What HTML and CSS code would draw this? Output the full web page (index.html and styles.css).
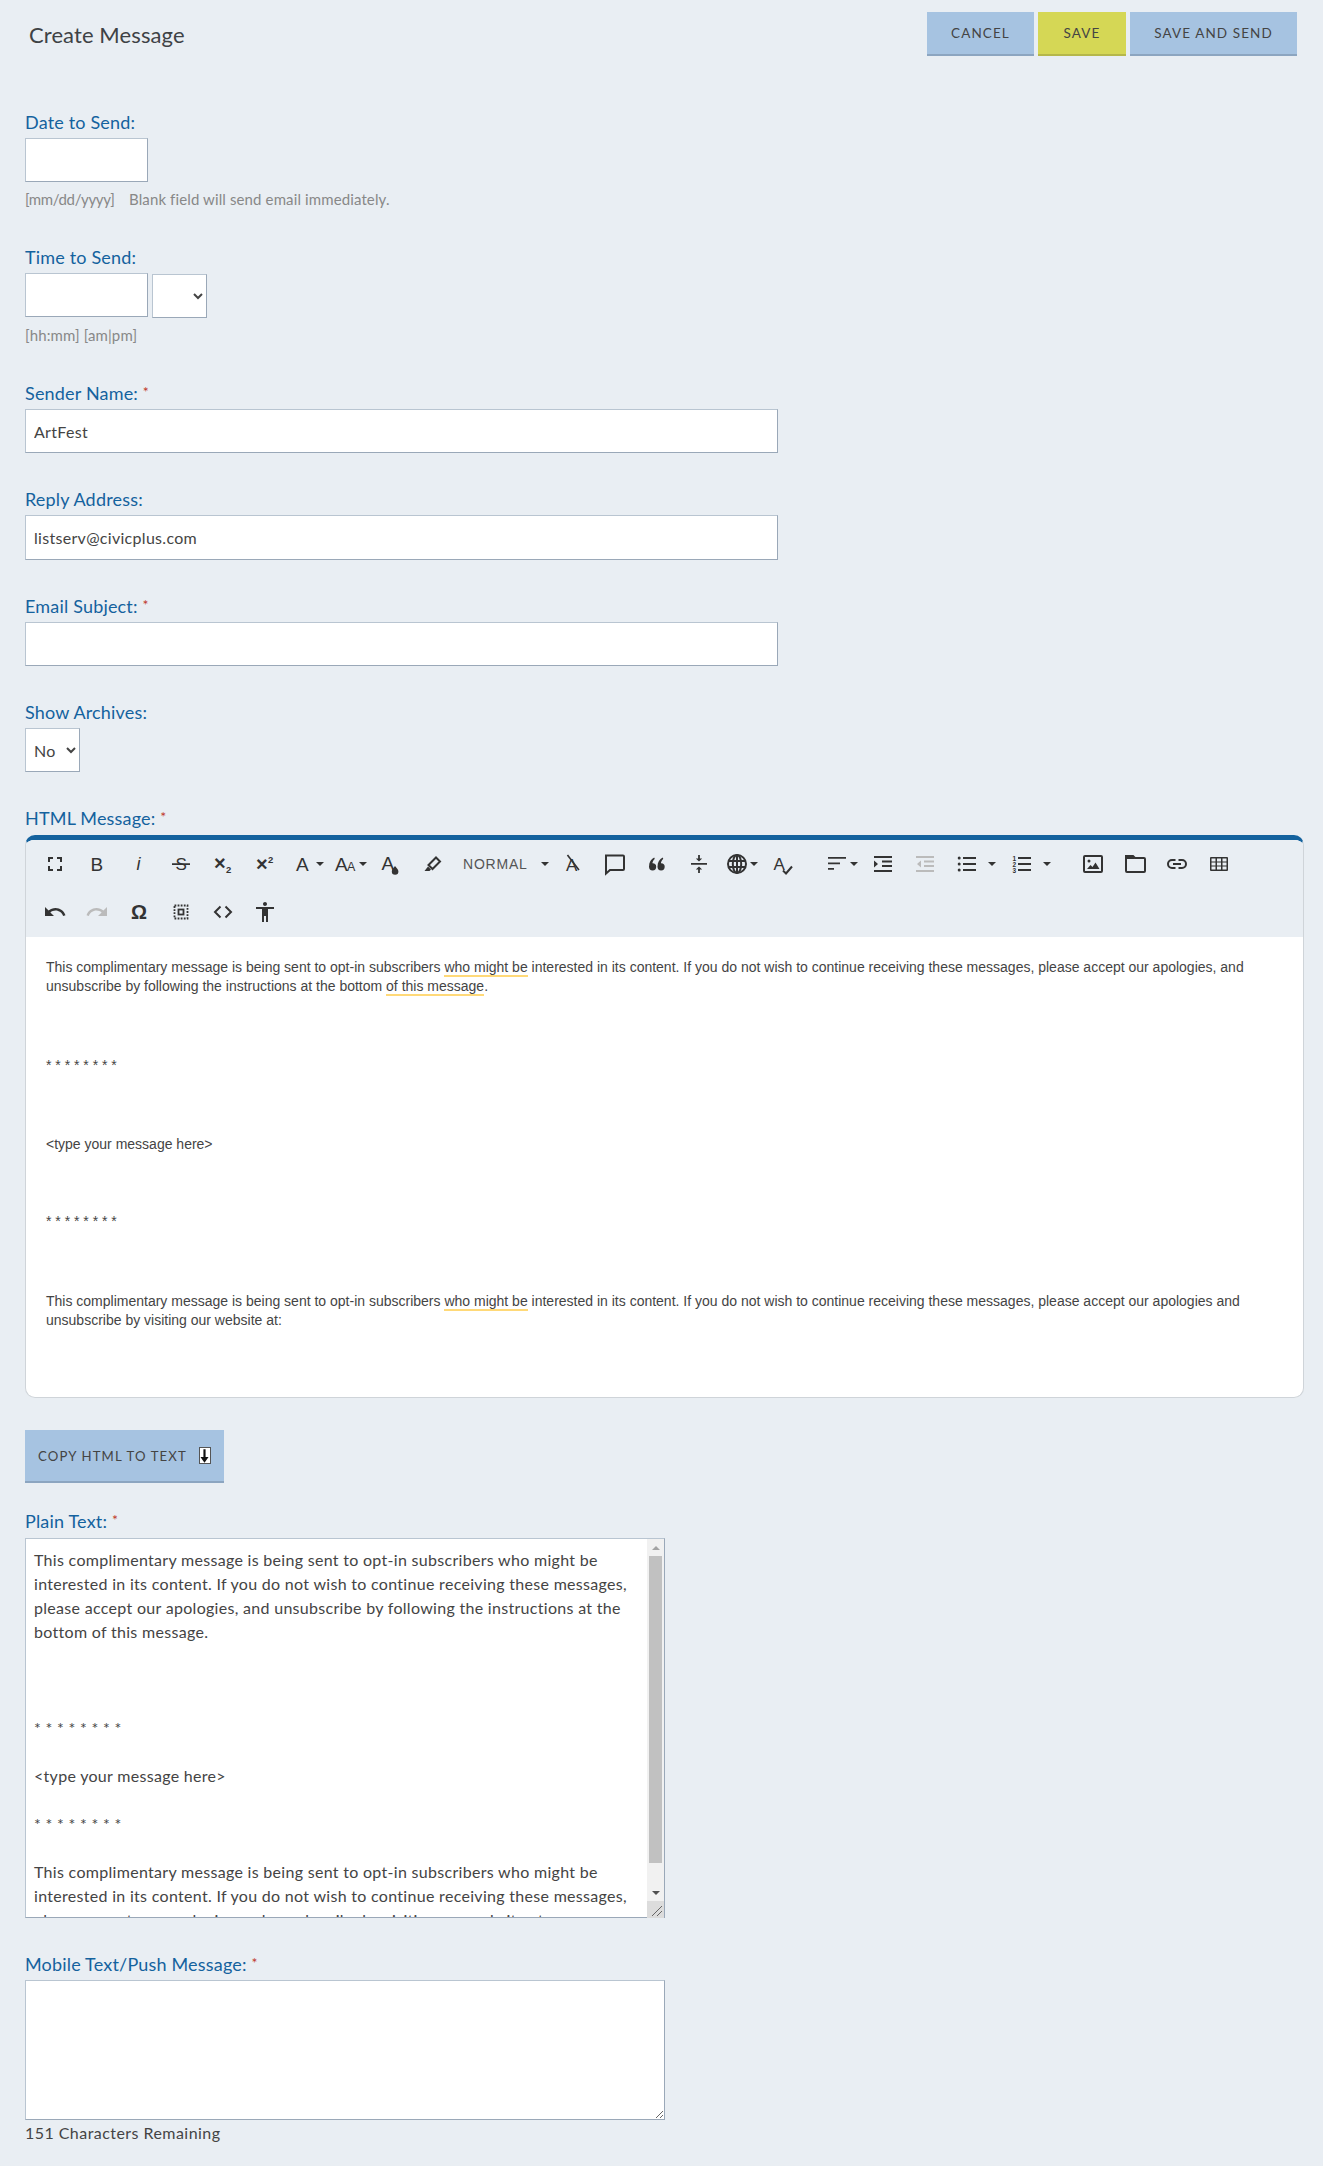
FILE: index.html
```html
<!DOCTYPE html>
<html lang="en">
<head>
    <meta charset="UTF-8">
    <title>Create Message</title>
    <link rel="stylesheet" href="styles.css">
</head>
<body>
    <div class="page">
        <div class="header">
            <h1 class="title">Create Message</h1>
            <div class="actions">
                <button type="button" class="btn btn-cancel">Cancel</button>
                <button type="button" class="btn btn-save">Save</button>
                <button type="button" class="btn btn-send">Save and Send</button>
            </div>
        </div>

        <!-- Schedule -->
        <div class="field field-schedule">
            <label class="label" for="dateSend">Date to Send:</label>
            <input class="input input-short" type="text" id="dateSend">
            <div class="hint"><span class="hint-format">[mm/dd/yyyy]</span>Blank field will send email immediately.</div>
        </div>
        <div class="field field-schedule">
            <label class="label" for="timeSend">Time to Send:</label>
            <div class="time-row">
                <input class="input input-short" type="text" id="timeSend">
                <select class="select select-ampm"><option></option><option>am</option><option>pm</option></select>
            </div>
            <div class="hint">[hh:mm] [am|pm]</div>
        </div>

        <!-- Sender -->
        <div class="field">
            <label class="label" for="senderName">Sender Name: <span class="req">*</span></label>
            <input class="input input-wide" type="text" id="senderName" value="ArtFest">
        </div>
        <div class="field">
            <label class="label" for="replyAddress">Reply Address:</label>
            <input class="input input-wide" type="text" id="replyAddress" value="listserv@civicplus.com">
        </div>
        <div class="field">
            <label class="label" for="emailSubject">Email Subject: <span class="req">*</span></label>
            <input class="input input-wide" type="text" id="emailSubject">
        </div>
        <div class="field">
            <label class="label" for="showArchives">Show Archives:</label>
            <select class="select select-archive" id="showArchives"><option>No</option><option>Yes</option></select>
        </div>

        <!-- Editor -->
        <div class="field-editor">
            <div class="label">HTML Message: <span class="req">*</span></div>
            <div class="editor">
                <div class="toolbar">
                    <div class="tool-row">
                        <button type="button" class="tool"><svg viewBox="0 0 24 24"><path d="M5 5h5v2H7v3H5z M14 5h5v5h-2V7h-3z M5 14h2v3h3v2H5z M17 14h2v5h-5v-2h3z"/></svg></button>
                        <button type="button" class="tool"><svg viewBox="0 0 24 24"><text class="ico-text" x="5.500" y="19" font-size="19">B</text></svg></button>
                        <button type="button" class="tool"><svg viewBox="0 0 24 24"><text class="ico-text" x="9.500" y="18" font-size="18" font-style="italic">i</text></svg></button>
                        <button type="button" class="tool"><svg viewBox="0 0 24 24"><text class="ico-text" x="6.500" y="18" font-size="17">S</text><path d="M3 11.300h18v1.600H3z"/></svg></button>
                        <button type="button" class="tool"><svg viewBox="0 0 24 24"><text class="ico-bold" x="3" y="18" font-size="20">×</text><text class="ico-bold" x="15" y="21" font-size="9.500">2</text></svg></button>
                        <button type="button" class="tool"><svg viewBox="0 0 24 24"><text class="ico-bold" x="3" y="19" font-size="20">×</text><text class="ico-bold" x="15" y="11" font-size="9.500">2</text></svg></button>
                        <button type="button" class="tool tool-font"><svg viewBox="0 0 24 24"><text class="ico-text" x="5" y="19" font-size="19">A</text></svg><span class="caret"></span></button>
                        <button type="button" class="tool tool-size"><svg viewBox="0 0 24 24"><text class="ico-text" x="1" y="19" font-size="19">A</text><text class="ico-text" x="13" y="19" font-size="12.500">A</text></svg><span class="caret"></span></button>
                        <button type="button" class="tool"><svg viewBox="0 0 24 24"><text class="ico-text" x="2.500" y="18" font-size="19">A</text><path d="M16 14c-2 2.500-3.200 3.800-3.200 5.400a3.300 3.300 0 0 0 6.600 0c0-1.600-1.300-2.900-3.400-5.400z"/></svg></button>
                        <button type="button" class="tool"><svg viewBox="0 0 24 24"><path class="ico-line" d="M15 5.500l4 4-7.500 7.500-4-4z"/><path d="M7 14.500l3 3-1.500 1.500H3.500z"/></svg></button>
                        <button type="button" class="tool tool-format"><span class="format-name">Normal</span><span class="caret"></span></button>
                        <button type="button" class="tool"><svg viewBox="0 0 24 24"><text class="ico-text" x="5" y="19" font-size="17">A</text><path d="M5.800 3.500l1.300-1 11.500 15-1.300 1z"/></svg></button>
                        <button type="button" class="tool"><svg viewBox="0 0 24 24"><path class="ico-line" d="M3 3.500h17a1 1 0 0 1 1 1V17a1 1 0 0 1-1 1H7l-4 3.500z"/></svg></button>
                        <button type="button" class="tool"><svg viewBox="0 0 24 24"><path d="M9.200 5.500C6 7 4 10.200 4 14.800a3.600 3.600 0 1 0 3.600-3.600c-.3 0 .2-2.700 2.200-4.200z M17.700 5.500c-3.200 1.500-5.200 4.700-5.200 9.300a3.600 3.600 0 1 0 3.600-3.600c-.3 0 .2-2.700 2.200-4.200z"/></svg></button>
                        <button type="button" class="tool"><svg viewBox="0 0 24 24"><path d="M4 11h16v1.800H4z M11.100 3h1.800v3.500h2.300L12 9.500 8.800 6.500h2.300z M12 14.500l3.200 3h-2.300V21h-1.800v-3.500H8.800z"/></svg></button>
                        <button type="button" class="tool tool-lang"><svg viewBox="0 0 24 24"><g class="ico-line"><circle cx="12" cy="12" r="9"/><ellipse cx="12" cy="12" rx="4.200" ry="9"/><path d="M3 9h18M3 15h18M12 3v18"/></g></svg><span class="caret"></span></button>
                        <button type="button" class="tool"><svg viewBox="0 0 24 24"><text class="ico-text" x="2.500" y="18" font-size="17">A</text><path class="ico-line" d="M12 18.500l3 3 6-7"/></svg></button>
                        <button type="button" class="tool tool-align"><svg viewBox="0 0 24 24"><path d="M3 5h18v1.800H3z M3 10.500h12v1.800H3z M3 16h6v1.800H3z"/></svg><span class="caret"></span></button>
                        <button type="button" class="tool"><svg viewBox="0 0 24 24"><path d="M3 4h18v2H3z M11 8.500h10v2H11z M11 13h10v2H11z M3 18h18v2H3z M3 8.500L7 12l-4 3.500z"/></svg></button>
                        <button type="button" class="tool tool-off"><svg viewBox="0 0 24 24"><path d="M3 4h18v2H3z M11 8.500h10v2H11z M11 13h10v2H11z M3 18h18v2H3z M8 8.500V15.500L4 12z"/></svg></button>
                        <button type="button" class="tool tool-list"><svg viewBox="0 0 24 24"><circle cx="4.200" cy="6" r="1.500"/><circle cx="4.200" cy="12" r="1.500"/><circle cx="4.200" cy="18" r="1.500"/><path d="M8 5h13v2H8z M8 11h13v2H8z M8 17h13v2H8z"/></svg><span class="caret"></span></button>
                        <button type="button" class="tool tool-list tool-list-num"><svg viewBox="0 0 24 24"><text class="ico-bold" x="2.500" y="8.500" font-size="6.500">1</text><text class="ico-bold" x="2.500" y="14.500" font-size="6.500">2</text><text class="ico-bold" x="2.500" y="20.500" font-size="6.500">3</text><path d="M8 5h13v2H8z M8 11h13v2H8z M8 17h13v2H8z"/></svg><span class="caret"></span></button>
                        <button type="button" class="tool tool-insert"><svg viewBox="0 0 24 24"><rect class="ico-line" x="3" y="4" width="18" height="16" rx="1"/><circle cx="8" cy="9" r="1.500"/><path d="M6 17l3.500-4 2 2 3-4.500L18.500 17z"/></svg></button>
                        <button type="button" class="tool"><svg viewBox="0 0 24 24"><path class="ico-line" d="M3 4h7l2 2h9a1 1 0 0 1 1 1v12a1 1 0 0 1-1 1H4a1 1 0 0 1-1-1z"/><path d="M3 4h7l2 3H3z"/></svg></button>
                        <button type="button" class="tool"><svg viewBox="0 0 24 24"><path class="ico-line" d="M10.500 8H7a4 4 0 0 0 0 8h3.500 M13.500 8H17a4 4 0 0 1 0 8h-3.500 M8 12h8"/></svg></button>
                        <button type="button" class="tool"><svg viewBox="0 0 24 24"><path d="M4 5h16a1 1 0 0 1 1 1v12a1 1 0 0 1-1 1H4a1 1 0 0 1-1-1V6a1 1 0 0 1 1-1z M4.500 6.500v3h4v-3z M10 6.500v3h4v-3z M15.500 6.500v3h4v-3z M4.500 10.500v3h4v-3z M10 10.500v3h4v-3z M15.500 10.500v3h4v-3z M4.500 14.500v3h4v-3z M10 14.500v3h4v-3z M15.500 14.500v3h4v-3z" fill-rule="evenodd"/></svg></button>
                    </div>
                    <div class="tool-row">
                        <button type="button" class="tool"><svg viewBox="0 0 24 24"><path d="M12.500 8c-2.650 0-5.050.99-6.900 2.600L2 7v9h9l-3.620-3.620c1.390-1.160 3.160-1.880 5.120-1.880 3.540 0 6.550 2.310 7.600 5.500l2.370-.78C21.080 11.030 17.150 8 12.500 8z"/></svg></button>
                        <button type="button" class="tool tool-off"><svg viewBox="0 0 24 24"><path d="M18.400 10.600C16.550 8.990 14.150 8 11.500 8c-4.650 0-8.580 3.030-9.960 7.220l2.360.78c1.050-3.190 4.050-5.500 7.600-5.500 1.950 0 3.730.72 5.120 1.880L13 16h9V7z"/></svg></button>
                        <button type="button" class="tool"><svg viewBox="0 0 24 24"><text class="ico-bold" x="4" y="19" font-size="20">Ω</text></svg></button>
                        <button type="button" class="tool"><svg viewBox="0 0 24 24"><rect x="5.500" y="5.500" width="13" height="13" fill="none" stroke="#333" stroke-width="1.800" stroke-dasharray="1.800 1.300"/><rect x="9.500" y="9.500" width="5" height="5" fill="none" stroke="#333" stroke-width="1.800"/></svg></button>
                        <button type="button" class="tool"><svg viewBox="0 0 24 24"><path class="ico-line" d="M9.500 6.500L4 12l5.500 5.500 M14.500 6.500L20 12l-5.500 5.500"/></svg></button>
                        <button type="button" class="tool"><svg viewBox="0 0 24 24"><path d="M12 2c1.100 0 2 .9 2 2s-.9 2-2 2-2-.9-2-2 .9-2 2-2zm9 7h-6v13h-2v-6h-2v6H9V9H3V7h18v2z"/></svg></button>
                    </div>
                </div>
                <div class="editor-body">
                    <p>This complimentary message is being sent to opt-in subscribers <span class="flag">who might be</span> interested in its content. If you do not wish to continue receiving these messages, please accept our apologies, and unsubscribe by following the instructions at the bottom <span class="flag">of this message</span>.</p>
                    <p class="gap-stars">* * * * * * * *</p>
                    <p class="gap-type">&lt;type your message here&gt;</p>
                    <p class="gap-stars-two">* * * * * * * *</p>
                    <p class="gap-last">This complimentary message is being sent to opt-in subscribers <span class="flag">who might be</span> interested in its content. If you do not wish to continue receiving these messages, please accept our apologies and unsubscribe by visiting our website at:</p>
                </div>
            </div>
        </div>

        <button type="button" class="btn btn-copy">Copy HTML to Text <span class="down-box"><svg viewBox="0 0 10 15"><path d="M3.800 0h2.400v8.500H9.500L5 15 .5 8.500h3.300z"/></svg></span></button>

        <!-- Plain text -->
        <div class="field field-plain">
            <label class="label" for="plainText">Plain Text: <span class="req">*</span></label>
            <div class="plain-box">
                <textarea class="area area-plain" id="plainText">This complimentary message is being sent to opt-in subscribers who might be interested in its content. If you do not wish to continue receiving these messages, please accept our apologies, and unsubscribe by following the instructions at the bottom of this message.



* * * * * * * *

&lt;type your message here&gt;

* * * * * * * *

This complimentary message is being sent to opt-in subscribers who might be interested in its content. If you do not wish to continue receiving these messages, please accept our apologies and unsubscribe by visiting our website at:</textarea>
                <div class="scrollbar">
                    <span class="scroll-btn"><span class="arrow-up"></span></span>
                    <span class="scroll-thumb"></span>
                    <span class="scroll-rest"></span>
                    <span class="scroll-btn"><span class="arrow-down"></span></span>
                    <span class="scroll-corner"><svg viewBox="0 0 17 17"><path d="M15 5L5 15M15 10l-5 5" stroke="#666" stroke-width="1" fill="none"/></svg></span>
                </div>
            </div>
        </div>
        <div class="field-mobile">
            <label class="label" for="mobileText">Mobile Text/Push Message: <span class="req">*</span></label>
            <textarea class="area area-mobile" id="mobileText"></textarea>
            <div class="remaining">151 Characters Remaining</div>
        </div>
    </div>
</body>
</html>
```

FILE: styles.css
```css
* { box-sizing: border-box; }
html, body { margin: 0; padding: 0; }
body { background: #e9eef3; color: #444; font-family: "Lato", "Open Sans", sans-serif; height: 2166px; overflow: hidden; }
.page { padding: 12px 19px 0 25px; }

.header { display: flex; justify-content: space-between; align-items: flex-start; margin-bottom: 54px; padding-right: 7px; }
.title { margin: 11px 0 0 4px; font-size: 22px; line-height: 24px; font-weight: 400; letter-spacing: .1px; color: #3e4245; }
.actions { display: flex; gap: 4px; }

.btn { display: block; height: 44px; padding: 0; border: none; border-bottom: 2px solid #8ca5c0; background: #a6c3e1; color: #444; font-family: inherit; font-size: 13.5px; letter-spacing: 1.1px; text-transform: uppercase; cursor: pointer; }
.btn-cancel { width: 107px; }
.btn-save { width: 88px; background: #d5d755; border-bottom-color: #b5b74a; }
.btn-send { width: 167px; }
.btn-copy { display: flex; align-items: center; width: 199px; height: 53px; padding: 0 0 0 13px; margin-bottom: 26px; font-size: 13.2px; }
.down-box { display: flex; justify-content: center; width: 12px; height: 17px; margin-left: 12px; padding-top: 1px; background: #fff; border: 1px solid #555; }
.down-box svg { width: 9px; height: 14px; fill: #111; }

.label { display: block; margin-bottom: 4px; font-size: 18px; line-height: 24px; letter-spacing: .18px; color: #14629e; }
.req { color: #c0392b; font-size: 14px; line-height: 0; vertical-align: 3px; }
.field { margin-bottom: 34px; }
.field-schedule { margin-bottom: 36px; }
.field-editor { margin-bottom: 32px; }
.field-editor .label { margin-bottom: 5px; }
.field-plain .label { margin-bottom: 5px; }

.input, .select, .area { display: block; background: #fff; border: 1px solid #b9c5d1; border-right-color: #9aa8b8; border-bottom-color: #9aa8b8; border-radius: 0; color: #444; font-family: inherit; font-size: 16px; letter-spacing: .3px; }
.input { height: 44px; padding: 0 8px; outline: none; }
.input-short { width: 123px; }
.input-wide { width: 753px; height: 44.4px; }
.select { height: 44px; padding: 0 4px; }
.select-ampm { width: 55px; margin: 1px 0 0 4px; }
.select-archive { width: 55px; }
.time-row { display: flex; align-items: flex-start; }
.hint { margin-top: 7px; font-size: 15px; line-height: 20px; letter-spacing: .12px; color: #888; }
.hint-format { display: inline-block; width: 104px; letter-spacing: -.35px; }

/* froala style editor */
.editor { width: 1279px; height: 563px; background: #fff; border: 1px solid #cfd4d9; border-top: 5px solid #14629e; border-radius: 10px; overflow: hidden; }
.toolbar { height: 97px; padding: 4px 0 0 8px; background: #e9eef3; }
.tool-row { display: flex; height: 40px; margin-bottom: 8px; }
.tool { display: flex; align-items: center; justify-content: center; flex: none; width: 42px; height: 40px; padding: 0; border: none; background: none; cursor: pointer; }
.tool svg { width: 24px; height: 24px; fill: #333; flex: none; }
.tool-off svg { fill: #bbb; }
.ico-text { font-family: "Liberation Sans", Arial, sans-serif; }
.ico-bold { font-family: "Liberation Sans", Arial, sans-serif; font-weight: 700; }
.ico-line { fill: none; stroke: #333; stroke-width: 2; }
.caret { flex: none; width: 0; height: 0; margin-left: 1px; border-left: 4px solid transparent; border-right: 4px solid transparent; border-top: 4px solid #333; }
.tool-font { justify-content: flex-start; width: 44px; padding-left: 5px; }
.tool-size { justify-content: flex-start; width: 40px; padding-left: 4px; }
.tool-format { justify-content: flex-start; width: 98px; padding-left: 9px; }
.format-name { width: 77px; font-family: "Liberation Sans", Arial, sans-serif; font-size: 14px; letter-spacing: .8px; text-transform: uppercase; color: #555; text-align: left; }
.tool-lang { justify-content: flex-start; width: 42px; padding-left: 5px; }
.tool-align { justify-content: flex-start; width: 46px; margin-left: 12px; padding-left: 9px; }
.tool-list { justify-content: flex-start; width: 55px; padding-left: 9px; }
.tool-list .caret { margin-left: 9px; }
.tool-list-num { width: 54px; padding-left: 9px; }
.tool-insert { margin-left: 17px; }

.editor-body { padding: 21px 20px 0; font-family: "Liberation Sans", Arial, sans-serif; font-size: 14px; line-height: 19px; color: #444; }
.editor-body p { margin: 0; }
.flag { border-bottom: 2px solid #ffd978; }
.gap-stars { padding-top: 60px; }
.gap-type { padding-top: 60px; }
.gap-stars-two { padding-top: 58px; }
.gap-last { padding-top: 61px; }

.area { width: 640px; padding: 9px 8px; line-height: 24px; outline: none; }
.area-plain { height: 380px; padding-right: 24px; overflow: hidden; resize: none; }
.area-mobile { height: 140px; margin-bottom: 3px; }
.remaining { font-size: 16px; line-height: 20px; letter-spacing: .45px; color: #444; }

/* headless browser hides real scrollbars, so this one is drawn */
.plain-box { position: relative; width: 640px; }
.scrollbar { position: absolute; top: 1px; right: 1px; bottom: 0; display: flex; flex-direction: column; width: 17px; background: #f1f1f1; }
.scroll-btn { display: flex; align-items: center; justify-content: center; flex: none; height: 17px; }
.arrow-up, .arrow-down { width: 0; height: 0; border-left: 4px solid transparent; border-right: 4px solid transparent; }
.arrow-up { border-bottom: 4px solid #a3a3a3; }
.arrow-down { border-top: 4px solid #505050; }
.scroll-thumb { flex: none; height: 307px; margin: 0 2px; background: #c1c1c1; }
.scroll-rest { flex: 1; }
.scroll-corner { flex: none; height: 17px; background: #dcdcdc; }
.scroll-corner svg { display: block; width: 17px; height: 17px; }
```
